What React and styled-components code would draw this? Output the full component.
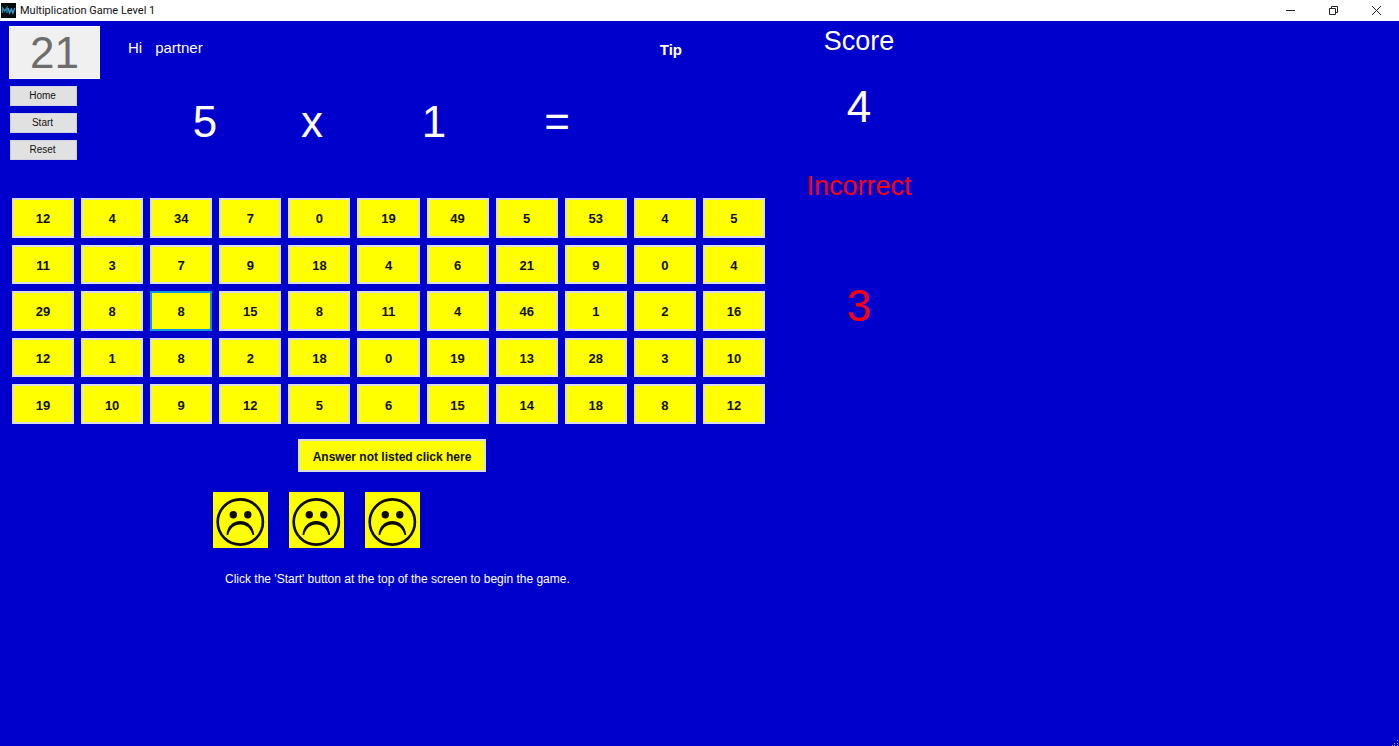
import React, { useState } from "react";
import styled, { createGlobalStyle } from "styled-components";

const GlobalStyle = createGlobalStyle`
  *, *::before, *::after { box-sizing: border-box; }
  body {
    margin: 0;
    background: #0000cd;
    color: #fff;
    font-family: "Liberation Sans", Arial, sans-serif;
  }
  p, h1, h2 { margin: 0; font-weight: 400; }
  button, input { font-family: inherit; margin: 0; }
`;

const Window = styled.div`
  min-height: 100vh;
  display: flex;
  flex-direction: column;
`;

const TitleBar = styled.header`
  height: 21px;
  display: flex;
  align-items: center;
  background: #fff;
  color: #111;
  padding: 0 1px;
  gap: 4px;
`;

const Title = styled.h1`
  flex: 1;
  font: 400 11px/20px Roboto, "Noto Sans", sans-serif;
`;

const WindowButtons = styled.div`
  display: flex;
`;

const WindowButton = styled.button`
  width: 43px;
  height: 20px;
  padding: 0;
  border: 0;
  background: none;
  display: grid;
  place-items: center;
`;

const Content = styled.main`
  flex: 1;
  display: flex;
  align-items: flex-start;
`;

const Board = styled.section`
  flex: 0 1 768px;
  padding: 5px 3px 0 12px;
`;

const Top = styled.div`
  display: flex;
  height: 172px;
  margin-left: -3px;
`;

const Controls = styled.div`
  width: 91px;
  display: flex;
  flex-direction: column;
  align-items: flex-start;
  gap: 7px;
`;

const Timer = styled.input`
  width: 91px;
  height: 53px;
  padding: 0;
  border: 1px solid #fff;
  background: #f0f0f0;
  color: #6d6d6d;
  font-size: 44px;
  text-align: center;
`;

const ControlButton = styled.button`
  width: 67px;
  height: 20px;
  margin-left: 1px;
  padding: 0 2px 1px 0;
  border: 1px solid #d2d2de;
  background: #e1e1e1;
  color: #111;
  font-size: 10px;
`;

const Prompt = styled.div`
  flex: 1;
  padding-left: 28px;
`;

const Greeting = styled.div`
  display: flex;
  align-items: center;
  justify-content: space-between;
  height: 42px;
  padding-right: 83px;
  font-size: 15px;
`;

const Player = styled.p`
  display: flex;
  gap: 13px;
`;

const Tip = styled.strong`
  font-size: 15px;
  padding-top: 4px;
`;

const Equation = styled.div`
  display: grid;
  grid-template-columns: 106px 108px 136px 110px;
  margin: 27px 0 0 24px;
  font-size: 44px;
  line-height: 54px;
  text-align: center;
`;

const Answers = styled.div`
  display: grid;
  grid-template-columns: repeat(11, 1fr);
  grid-template-rows: repeat(5, 1fr);
  gap: 7px;
  height: 226px;
`;

const AnswerButton = styled.button`
  padding: 2px 0 0;
  border: 2px solid ${(p) => (p.$focused ? "#1496dc" : "#dcdce6")};
  background: #ffff00;
  color: #111100;
  font-size: 13px;
  font-weight: 700;
  outline: none;
`;

const NotListed = styled(AnswerButton)`
  display: block;
  width: 188px;
  height: 33px;
  margin: 15px 0 0 286px;
  font-size: 12px;
`;

const Faces = styled.div`
  display: flex;
  gap: 21px;
  margin: 20px 0 0 201px;
`;

const FaceTile = styled.div`
  width: 55px;
  height: 56px;
  background: #ffff00;
`;

const Hint = styled.p`
  margin: 22px 0 0 213px;
  font-size: 12px;
  line-height: 18px;
`;

const Scores = styled.aside`
  width: 182px;
  text-align: center;
`;

const ScoreBlock = styled.section`
  color: ${(p) => p.$color};
  height: ${(p) => p.$height};
  display: flex;
  flex-direction: column;
  gap: ${(p) => p.$gap};
  padding-top: 4px;
`;

const ScoreLabel = styled.h2`
  font-size: 27px;
  line-height: 32px;
`;

const ScoreValue = styled.p`
  font-size: 44px;
  line-height: 50px;
`;

const SizeGrip = styled.svg`
  position: fixed;
  right: 0;
  bottom: 0;
`;

const rows = [
  [12, 4, 34, 7, 0, 19, 49, 5, 53, 4, 5],
  [11, 3, 7, 9, 18, 4, 6, 21, 9, 0, 4],
  [29, 8, 8, 15, 8, 11, 4, 46, 1, 2, 16],
  [12, 1, 8, 2, 18, 0, 19, 13, 28, 3, 10],
  [19, 10, 9, 12, 5, 6, 15, 14, 18, 8, 12],
];

function AppIcon() {
  return (
    <svg width="15" height="15" viewBox="0 0 15 15" aria-hidden="true">
      <rect width="15" height="15" fill="#050a0e" />
      <path d="M1.5 10V5l2.3 3 2.2-3v5" fill="none" stroke="#2487b5" strokeWidth="1.4" />
      <path d="M7 5l1.6 5L10.3 6l1.6 4L13.8 5" fill="none" stroke="#3aa0d0" strokeWidth="1.4" />
    </svg>
  );
}

function SadFace() {
  return (
    <FaceTile>
      <svg width="55" height="56" viewBox="0 0 55 56" role="img" aria-label="Sad face">
        <circle cx="27.3" cy="30" r="22.6" fill="none" stroke="#0c0c00" strokeWidth="2.6" />
        <circle cx="20.3" cy="22.8" r="3.7" fill="#0c0c00" />
        <circle cx="34.8" cy="22.8" r="3.7" fill="#0c0c00" />
        <path
          d="M13.500 43C14.200 34 20 29 27.300 29S40.500 34 41.200 43H39.500C38 36.500 33.500 32.400 27.300 32.400S16.700 36.500 15.200 43Z"
          fill="#0c0c00"
        />
      </svg>
    </FaceTile>
  );
}

export default function App() {
  const [focused, setFocused] = useState("2-2");

  return (
    <Window>
      <GlobalStyle />
      <TitleBar>
        <AppIcon />
        <Title>Multiplication Game Level 1</Title>
        <WindowButtons>
          <WindowButton aria-label="Minimize">
            <svg width="11" height="11" viewBox="0 0 11 11">
              <path d="M1 5.5h9" stroke="#222" />
            </svg>
          </WindowButton>
          <WindowButton aria-label="Restore">
            <svg width="11" height="11" viewBox="0 0 11 11" fill="none" stroke="#222">
              <path d="M1.500 3.500h6v6h-6zM3.500 3.500v-2h6v6h-2" />
            </svg>
          </WindowButton>
          <WindowButton aria-label="Close">
            <svg width="11" height="11" viewBox="0 0 11 11">
              <path d="M1 1l9 9M10 1l-9 9" stroke="#222" />
            </svg>
          </WindowButton>
        </WindowButtons>
      </TitleBar>
      <Content>
        <Board>
          <Top>
            <Controls>
              <Timer aria-label="Seconds left" value="21" readOnly />
              <ControlButton>Home</ControlButton>
              <ControlButton>Start</ControlButton>
              <ControlButton>Reset</ControlButton>
            </Controls>
            <Prompt>
              <Greeting>
                <Player>
                  <span>Hi</span>
                  <span>partner</span>
                </Player>
                <Tip>Tip</Tip>
              </Greeting>
              <Equation>
                <span>5</span>
                <span>x</span>
                <span>1</span>
                <span>=</span>
              </Equation>
            </Prompt>
          </Top>
          <Answers>
            {rows.map((row, r) =>
              row.map((value, c) => (
                <AnswerButton
                  key={`${r}-${c}`}
                  $focused={focused === `${r}-${c}`}
                  onClick={() => setFocused(`${r}-${c}`)}
                >
                  {value}
                </AnswerButton>
              ))
            )}
          </Answers>
          <NotListed>Answer not listed click here</NotListed>
          <Faces>
            <SadFace />
            <SadFace />
            <SadFace />
          </Faces>
          <Hint>Click the 'Start' button at the top of the screen to begin the game.</Hint>
        </Board>
        <Scores>
          <ScoreBlock $color="#fff" $height="145px" $gap="25px">
            <ScoreLabel>Score</ScoreLabel>
            <ScoreValue>4</ScoreValue>
          </ScoreBlock>
          <ScoreBlock $color="#fa000f" $height="170px" $gap="79px">
            <ScoreLabel>Incorrect</ScoreLabel>
            <ScoreValue>3</ScoreValue>
          </ScoreBlock>
        </Scores>
      </Content>
      <SizeGrip width="8" height="8" viewBox="0 0 8 8" fill="#a8b4e8" aria-hidden="true">
        <path d="M6 2h1v1H6zM3 5h1v1H3zM6 5h1v1H6zM1 7h1v1H1zM3 7h1v1H3zM6 7h1v1H6z" />
      </SizeGrip>
    </Window>
  );
}
